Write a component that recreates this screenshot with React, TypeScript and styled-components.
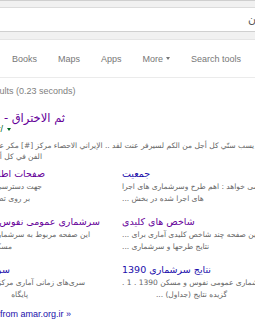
import React from "react";
import styled, { createGlobalStyle } from "styled-components";

const GlobalStyle = createGlobalStyle`
  html, body {
    margin: 0;
    padding: 0;
    background: #fff;
  }
  body {
    font-family: "Liberation Sans", Arial, "DejaVu Sans", sans-serif;
  }
`;

const Page = styled.div`
  width: 255px;
  height: 333px;
  overflow: hidden;
  background: #fff;
`;

const Header = styled.header`
  background: #f1f1f1;
  border-top: 1px solid #cfcfcf;
  border-bottom: 1px solid #e5e5e5;
  padding: 6px 0 7px;
`;

const SearchBox = styled.div`
  height: 23px;
  background: #fff;
  border-top: 1px solid #dcdcdc;
  border-bottom: 1px solid #d0d0d0;
  padding-left: 248px;
  display: flex;
  align-items: center;
  white-space: nowrap;
  overflow: hidden;
  font-family: "DejaVu Sans", sans-serif;
  font-size: 11px;
  color: #555;
`;

const Tabs = styled.nav`
  height: 37px;
  display: flex;
  align-items: center;
  gap: 21px;
  padding-left: 12px;
  border-bottom: 1px solid #ebebeb;
`;

const Tab = styled.span`
  font-size: 9px;
  color: #777;
  display: flex;
  align-items: center;
  gap: 3px;
  white-space: nowrap;
`;

const Caret = styled.span<{ $color?: string }>`
  display: inline-block;
  width: 0;
  height: 0;
  border-left: 2.5px solid transparent;
  border-right: 2.5px solid transparent;
  border-top: 3px solid ${(p) => p.$color || "#777"};
`;

// the results column starts left of the visible area, as in the cropped page
const Results = styled.main`
  margin-left: -64px;
  width: 420px;
`;

const Stats = styled.div`
  margin-top: 8px;
  font-size: 9px;
  line-height: 11px;
  color: #808080;
  white-space: nowrap;
`;

const Result = styled.div`
  margin-top: 15px;
`;

const Title = styled.div`
  font-family: "DejaVu Sans", sans-serif;
  font-size: 11.5px;
  line-height: 13px;
  color: #660099;
`;

const Cite = styled.div`
  display: flex;
  align-items: center;
  gap: 4px;
  height: 8px;
  font-size: 9px;
  color: #006621;
  white-space: nowrap;
`;

const Snippet = styled.div`
  margin-top: 7px;
  font-family: "DejaVu Sans", sans-serif;
  font-size: 7.5px;
  line-height: 11px;
  color: #666;
`;

// one line of Persian text; $w pins its right end (it overflows to the left)
const Line = styled.div<{ $w?: number }>`
  white-space: nowrap;
  unicode-bidi: plaintext;
  ${(p) =>
    p.$w
      ? `width: ${p.$w}px; direction: rtl; text-align: right;`
      : `direction: ltr; text-align: left;`}
`;

const Sitelinks = styled.div`
  margin-top: 5px;
  display: grid;
  grid-template-columns: 186px 170px;
  row-gap: 10px;
`;

const Sitelink = styled.div``;

const SiteTitle = styled.div<{ $visited?: boolean }>`
  font-family: "DejaVu Sans", sans-serif;
  font-size: 9.5px;
  line-height: 14px;
  color: ${(p) => (p.$visited ? "#660099" : "#1a0dab")};
`;

const SiteDesc = styled.div`
  font-family: "DejaVu Sans", sans-serif;
  font-size: 7.5px;
  line-height: 12px;
  color: #666;
`;

const MoreLink = styled.div`
  margin-top: 7px;
  margin-left: 12px;
  font-size: 9px;
  line-height: 12px;
  color: #1a0dab;
  white-space: nowrap;
`;

type Text = { t: string; w?: number };
type Link = { title: Text; visited?: boolean; lines: Text[] };

const sitelinks: Link[] = [
  {
    title: { t: "صفحات اطلاعات آماری", w: 109 },
    visited: true,
    lines: [
      { t: "جهت دسترسی به اطلاعات آماری", w: 106 },
      { t: "بر روی تصویر کلیک کنید", w: 94 },
    ],
  },
  {
    title: { t: "جمعیت" },
    lines: [{ t: "این صفحه می خواهد : اهم طرح وسرشماری های اجرا" }, { t: "های اجرا شده در بخش ..." }],
  },
  {
    title: { t: "سرشماری عمومی نفوس و مسکن", w: 164 },
    visited: true,
    lines: [
      { t: "این صفحه مربوط به سرشماری عمومی", w: 154 },
      { t: "مسکن ۱۳۹۰ می باشد", w: 76 },
    ],
  },
  {
    title: { t: "شاخص های کلیدی" },
    visited: true,
    lines: [{ t: "این صفحه چند شاخص کلیدی آماری برای ..." }, { t: "نتایج طرحها و سرشماری ..." }],
  },
  {
    title: { t: "سری های زمانی", w: 74 },
    lines: [
      { t: "سری‌های زمانی آماری مرکز آمار ایران", w: 149 },
      { t: "پایگاه", w: 92 },
    ],
  },
  {
    title: { t: "نتایج سرشماری 1390" },
    lines: [{ t: "سرشماری عمومی نفوس و مسکن 1390 . 1 ." }, { t: "گزیده نتایج (جداول) ...", w: 105 }],
  },
];

export default function App() {
  return (
    <Page>
      <GlobalStyle />
      <Header>
        <SearchBox>
          <span dir="rtl">مرکز آمار ایران</span>
        </SearchBox>
      </Header>
      <Tabs>
        <Tab>Books</Tab>
        <Tab>Maps</Tab>
        <Tab>Apps</Tab>
        <Tab>
          More <Caret />
        </Tab>
        <Tab>Search tools</Tab>
      </Tabs>
      <Results>
        <Stats>About 1,230 results (0.23 seconds)</Stats>
        <Result>
          <Title>
            <Line $w={129}>ثم الاختراق - مرکز آمار ایران</Line>
          </Title>
          <Cite>
            www.amar.org.ir/
            <Caret $color="#006621" />
          </Cite>
          <Snippet>
            <Line>
              سب لا يسب سنّي كل أجل من الكم لسيرفر عنت لقد .. الإيراني الاحصاء مركز [#] مكر عرض الموقع الرسمي
            </Line>
            <Line $w={106}>الفن في كل أنحاء العالم والشرق</Line>
          </Snippet>
          <Sitelinks>
            {sitelinks.map((s) => (
              <Sitelink key={s.title.t}>
                <SiteTitle $visited={s.visited}>
                  <Line $w={s.title.w}>{s.title.t}</Line>
                </SiteTitle>
                <SiteDesc>
                  {s.lines.map((l) => (
                    <Line key={l.t} $w={l.w}>
                      {l.t}
                    </Line>
                  ))}
                </SiteDesc>
              </Sitelink>
            ))}
          </Sitelinks>
        </Result>
        <MoreLink>More results from amar.org.ir »</MoreLink>
      </Results>
    </Page>
  );
}
